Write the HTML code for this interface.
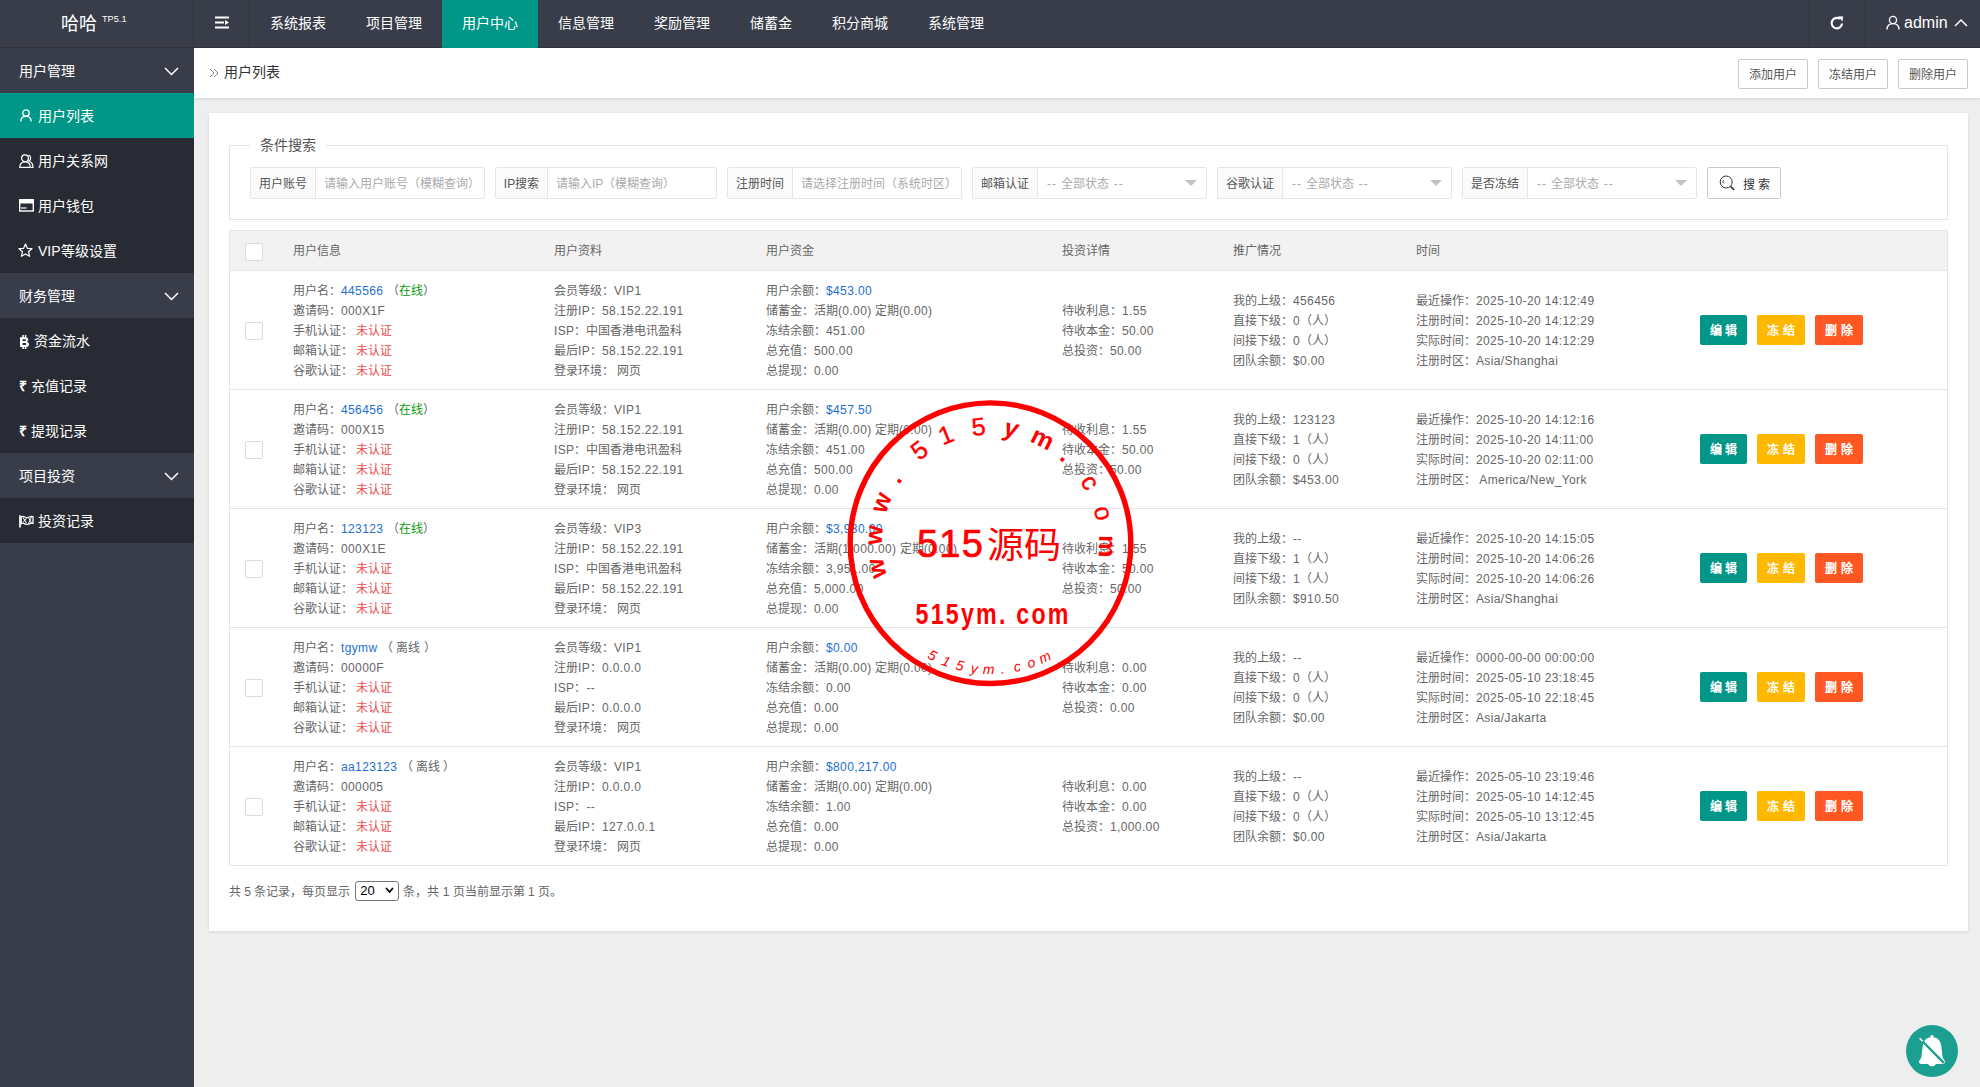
<!DOCTYPE html>
<html lang="zh-CN"><head><meta charset="utf-8">
<style>
*{box-sizing:border-box}
html,body{margin:0;padding:0}
body{width:1980px;height:1087px;overflow:hidden;position:relative;background:#eeeeee;font-family:"Liberation Sans",sans-serif;color:#666;font-size:12px}
.abs{position:absolute}
#hdr{position:absolute;left:0;top:0;width:1980px;height:48px;background:#393D4A;border-bottom:1px solid #30333D}
#hdr .vl{position:absolute;top:0;width:1px;height:47px;background:#30333D}
#hdr .nav{position:absolute;top:0;height:47px;line-height:46px;font-size:14px;color:#fff;white-space:nowrap}
#hdr .act{position:absolute;left:442px;top:0;width:96px;height:48px;background:#009688}
#logo{position:absolute;left:61px;top:9.5px;font-size:18px;color:#fff;line-height:28px;white-space:nowrap}
#logo sup{font-size:9.2px;position:absolute;left:41px;top:-5px;line-height:28px}
#side{position:absolute;left:0;top:48px;width:194px;height:1039px;background:#393D4A}
#side .it{position:absolute;left:0;width:194px;height:45px;background:#282B33;color:#fff;font-size:14px;line-height:45px;white-space:nowrap}
#side .gp{position:absolute;left:0;width:194px;height:45px;background:#393D4A;color:#fff;font-size:14px;line-height:45px;white-space:nowrap}
#side .on{background:#009688}
#side .tx{position:absolute;top:1px}
#side svg{position:absolute}
#crumb{position:absolute;left:194px;top:48px;width:1786px;height:50px;background:#fff;box-shadow:0 1px 3px rgba(0,0,0,.12)}
.tbtn{position:absolute;top:11px;width:70px;height:30px;border:1px solid #C9C9C9;border-radius:2px;background:#fff;font-size:12px;color:#555;line-height:31px;text-align:center}
#card{position:absolute;left:209px;top:113px;width:1759px;height:818px;background:#fff;box-shadow:0 1px 3px rgba(0,0,0,.1)}
#fs{position:absolute;left:229px;top:145px;width:1719px;height:75px;border:1px solid #e6e6e6;border-top:none}
#fs .tl{position:absolute;top:0;height:1px;background:#e6e6e6}
#legend{position:absolute;left:260px;top:135px;font-size:14px;line-height:20px;color:#555}
.ig{position:absolute;top:167px;height:32px;border:1px solid #e6e6e6;border-radius:2px;background:#fff}
.ig .lb{position:absolute;left:0;top:0;height:30px;background:#FBFBFB;border-right:1px solid #e6e6e6;color:#555;line-height:32px;text-align:center;white-space:nowrap}
.ig .ph{position:absolute;top:0;line-height:32px;color:#aaa;white-space:nowrap}
.ig .ar{position:absolute;top:12px;width:0;height:0;border-left:6px solid transparent;border-right:6px solid transparent;border-top:6px solid #c2c2c2}
#sbtn{position:absolute;left:1707px;top:167px;width:74px;height:32px;border:1px solid #C9C9C9;border-radius:2px;background:#fff;color:#333;line-height:30px;font-size:12px;white-space:nowrap}
#tbl{position:absolute;left:229px;top:230px;width:1719px;height:636px;border:1px solid #e6e6e6}
#th{position:absolute;left:230px;top:231px;width:1717px;height:40px;background:#f2f2f2;border-bottom:1px solid #e6e6e6}
#th span{position:absolute;top:1px;line-height:39px;color:#666}
.cb{position:absolute;width:18px;height:18px;border:1px solid #dcdcdc;background:#fff;border-radius:2px}
.row{position:absolute;left:230px;width:1717px;height:119px;border-bottom:1px solid #e6e6e6}
.row .cb{top:51px}
.cell{position:absolute;top:0;padding-top:2px;height:118px;display:flex;flex-direction:column;justify-content:center;line-height:20px;white-space:nowrap;color:#666}
.cell i{font-style:normal;letter-spacing:0.37px}
.b{color:#1E6FD0}
.g{color:#0A9A0A}
.r{color:#EB4A4F}
.acts{position:absolute;left:1470px;top:44px;height:30px;white-space:nowrap}
.bt{position:absolute;top:0;height:30px;line-height:33px;color:#fff;border-radius:2px;text-align:center;font-size:12px;font-weight:bold}
.bt:nth-child(1){left:0;width:47px}
.bt:nth-child(2){left:57px;width:48px}
.bt:nth-child(3){left:115px;width:48px}
#pg{position:absolute;left:229px;top:882px;line-height:20px;color:#666;white-space:nowrap}
#sel{display:inline-block;vertical-align:middle;width:44px;height:20px;border:1px solid #767676;border-radius:3px;position:relative;margin:0 4px 0 5px;top:-2px;color:#000;line-height:17px;padding-left:4px;font-size:13px}
#bell{position:absolute;left:1906px;top:1025px;width:52px;height:52px;border-radius:50%;background:#1A9F90}
</style></head>
<body>
<div id="hdr">
  <div id="logo">哈哈<sup>TP5.1</sup></div>
  <div class="vl" style="left:193px"></div>
  <div class="vl" style="left:249px"></div>
  <svg class="abs" style="left:214px;top:16px" width="16" height="13" viewBox="0 0 16 13"><rect x="1" y="0.5" width="14" height="2" fill="#fff"/><rect x="1" y="5.5" width="9" height="2" fill="#fff"/><path d="M11 4 L15 6.5 L11 9 Z" fill="#fff"/><rect x="1" y="10.5" width="14" height="2" fill="#fff"/></svg>
  <div class="act"></div>
  <div class="nav" style="left:270px">系统报表</div>
  <div class="nav" style="left:366px">项目管理</div>
  <div class="nav" style="left:462px">用户中心</div>
  <div class="nav" style="left:558px">信息管理</div>
  <div class="nav" style="left:654px">奖励管理</div>
  <div class="nav" style="left:750px">储蓄金</div>
  <div class="nav" style="left:832px">积分商城</div>
  <div class="nav" style="left:928px">系统管理</div>
  <div class="vl" style="left:1809px"></div>
  <div class="vl" style="left:1865px"></div>
  <svg class="abs" style="left:1829px;top:15px" width="16" height="16" viewBox="0 0 16 16"><path d="M13 8.5 A5.2 5.2 0 1 1 10.8 3.9" fill="none" stroke="#fff" stroke-width="2.2"/><path d="M9 1.2 L14.2 1.6 L13.4 6.6 Z" fill="#fff"/></svg>
  <svg class="abs" style="left:1886px;top:15px" width="14" height="15" viewBox="0 0 14 15"><circle cx="7" cy="5" r="3.6" fill="none" stroke="#fff" stroke-width="1.4"/><path d="M1 14.5 C1 10.5 3.5 8.6 7 8.6 C10.5 8.6 13 10.5 13 14.5" fill="none" stroke="#fff" stroke-width="1.4"/></svg>
  <div class="nav" style="left:1904px;font-size:16px">admin</div>
  <svg class="abs" style="left:1954px;top:18px" width="14" height="9" viewBox="0 0 14 9"><path d="M1 8 L7 2 L13 8" fill="none" stroke="#fff" stroke-width="1.5"/></svg>
</div>

<div id="side">
  <div class="gp" style="top:0"><span class="tx" style="left:19px">用户管理</span>
    <svg style="left:164px;top:19px" width="15" height="9" viewBox="0 0 15 9"><path d="M1 1 L7.5 7.5 L14 1" fill="none" stroke="#fff" stroke-width="1.5"/></svg></div>
  <div class="it on" style="top:45px"><svg style="left:20px;top:16px" width="12" height="13" viewBox="0 0 12 13"><circle cx="6" cy="4" r="3.2" fill="none" stroke="#fff" stroke-width="1.3"/><path d="M0.8 12.5 C0.8 9 3 7.4 6 7.4 C9 7.4 11.2 9 11.2 12.5" fill="none" stroke="#fff" stroke-width="1.3"/></svg><span class="tx" style="left:38px">用户列表</span></div>
  <div class="it" style="top:90px"><svg style="left:19px;top:16px" width="15" height="14" viewBox="0 0 15 14"><circle cx="6" cy="4.2" r="3.4" fill="none" stroke="#fff" stroke-width="1.2"/><path d="M0.8 13.3 C0.8 9.6 3 7.8 6 7.8 C9 7.8 11.2 9.6 11.2 13.3 Z" fill="none" stroke="#fff" stroke-width="1.2"/><path d="M9.5 1.2 C12 1.5 12.5 5.5 10 7.2 C12.6 8 14 10 14 13.3 L12 13.3" fill="none" stroke="#fff" stroke-width="1.2"/></svg><span class="tx" style="left:38px">用户关系网</span></div>
  <div class="it" style="top:135px"><svg style="left:19px;top:16px" width="15" height="13" viewBox="0 0 15 13"><rect x="0.7" y="0.7" width="13.6" height="11.3" fill="none" stroke="#fff" stroke-width="1.4"/><rect x="0.5" y="0.5" width="14" height="4" fill="#fff"/><rect x="2" y="8.4" width="5.5" height="1.2" fill="#fff"/></svg><span class="tx" style="left:38px">用户钱包</span></div>
  <div class="it" style="top:180px"><svg style="left:18px;top:15px" width="15" height="15" viewBox="0 0 15 15"><path d="M7.5 1 L9.4 5.3 L14 5.7 L10.5 8.7 L11.6 13.3 L7.5 10.9 L3.4 13.3 L4.5 8.7 L1 5.7 L5.6 5.3 Z" fill="none" stroke="#fff" stroke-width="1.2" stroke-linejoin="round"/></svg><span class="tx" style="left:38px">VIP等级设置</span></div>
  <div class="gp" style="top:225px"><span class="tx" style="left:19px">财务管理</span>
    <svg style="left:164px;top:19px" width="15" height="9" viewBox="0 0 15 9"><path d="M1 1 L7.5 7.5 L14 1" fill="none" stroke="#fff" stroke-width="1.5"/></svg></div>
  <div class="it" style="top:270px"><svg style="left:19px;top:17px" width="11" height="14" viewBox="0 0 11 14"><path d="M1 2.2 H6.2 C8.4 2.2 9.3 3.3 9.3 4.6 C9.3 5.8 8.6 6.5 7.6 6.8 C9 7.1 10 8 10 9.4 C10 11 8.8 12 6.6 12 H1 Z M3.6 4.2 V6.1 H5.9 C6.6 6.1 6.9 5.7 6.9 5.15 C6.9 4.6 6.6 4.2 5.9 4.2 Z M3.6 7.9 V10 H6.1 C6.9 10 7.3 9.6 7.3 8.95 C7.3 8.3 6.9 7.9 6.1 7.9 Z" fill="#fff" fill-rule="evenodd"/><rect x="3.3" y="0" width="1.6" height="2.5" fill="#fff"/><rect x="5.8" y="0" width="1.6" height="2.5" fill="#fff"/><rect x="3.3" y="11.6" width="1.6" height="2.4" fill="#fff"/><rect x="5.8" y="11.6" width="1.6" height="2.4" fill="#fff"/></svg><span class="tx" style="left:34px">资金流水</span></div>
  <div class="it" style="top:315px"><span class="tx" style="left:19px;font-weight:bold">&#x20B9;</span><span class="tx" style="left:31px">充值记录</span></div>
  <div class="it" style="top:360px"><span class="tx" style="left:19px;font-weight:bold">&#x20B9;</span><span class="tx" style="left:31px">提现记录</span></div>
  <div class="gp" style="top:405px"><span class="tx" style="left:19px">项目投资</span>
    <svg style="left:164px;top:19px" width="15" height="9" viewBox="0 0 15 9"><path d="M1 1 L7.5 7.5 L14 1" fill="none" stroke="#fff" stroke-width="1.5"/></svg></div>
  <div class="it" style="top:450px"><svg style="left:19px;top:17px" width="15" height="13" viewBox="0 0 15 13"><path d="M1 0.3 L1 12.6" stroke="#fff" stroke-width="1.7"/><path d="M2.2 1.8 C4.5 0.2 6.5 3.2 8.6 2.6 C10.6 2 12 0.8 14 1.6 L14 8.4 C12 7.6 10.6 8.8 8.6 9.4 C6.5 10 4.5 7 2.2 8.6 Z" fill="none" stroke="#fff" stroke-width="1.3"/><path d="M4 2.5 L7.5 8 M7.5 3 L4 7.5 M9.5 2.5 L12.5 8 M12.5 2 L9.5 8.5" stroke="#fff" stroke-width="1"/></svg><span class="tx" style="left:38px">投资记录</span></div>
</div>

<div id="crumb">
  <svg class="abs" style="left:15px;top:20px" width="10" height="10" viewBox="0 0 10 10"><path d="M1 1 L5 5 L1 9 M5 1 L9 5 L5 9" fill="none" stroke="#888" stroke-width="1"/></svg>
  <span class="abs" style="left:30px;top:14px;font-size:14px;line-height:20px;color:#333">用户列表</span>
  <div class="tbtn" style="left:1544px">添加用户</div>
  <div class="tbtn" style="left:1624px">冻结用户</div>
  <div class="tbtn" style="left:1704px">删除用户</div>
</div>

<div id="card"></div>
<div id="fs"></div>
<div class="abs" style="left:229px;top:145px;width:21px;height:1px;background:#e6e6e6"></div>
<div class="abs" style="left:326px;top:145px;width:1622px;height:1px;background:#e6e6e6"></div>
<div id="legend">条件搜索</div>

<div class="ig" style="left:250px;width:235px"><div class="lb" style="width:65px">用户账号</div><div class="ph" style="left:73px">请输入用户账号（模糊查询）</div></div>
<div class="ig" style="left:495px;width:222px"><div class="lb" style="width:52px">IP搜索</div><div class="ph" style="left:60px">请输入IP（模糊查询）</div></div>
<div class="ig" style="left:727px;width:235px"><div class="lb" style="width:65px">注册时间</div><div class="ph" style="left:73px">请选择注册时间（系统时区）</div></div>
<div class="ig" style="left:972px;width:235px"><div class="lb" style="width:65px">邮箱认证</div><div class="ph" style="left:74px"><i style="font-style:normal;letter-spacing:1px">-- </i>全部状态<i style="font-style:normal;letter-spacing:1px"> --</i></div><div class="ar" style="left:212px"></div></div>
<div class="ig" style="left:1217px;width:235px"><div class="lb" style="width:65px">谷歌认证</div><div class="ph" style="left:74px"><i style="font-style:normal;letter-spacing:1px">-- </i>全部状态<i style="font-style:normal;letter-spacing:1px"> --</i></div><div class="ar" style="left:212px"></div></div>
<div class="ig" style="left:1462px;width:235px"><div class="lb" style="width:65px">是否冻结</div><div class="ph" style="left:74px"><i style="font-style:normal;letter-spacing:1px">-- </i>全部状态<i style="font-style:normal;letter-spacing:1px"> --</i></div><div class="ar" style="left:212px"></div></div>
<div id="sbtn"><svg class="abs" style="left:11px;top:7px" width="17" height="17" viewBox="0 0 17 17"><circle cx="7.2" cy="7" r="6" fill="none" stroke="#333" stroke-width="1"/><path d="M11.6 11.4 L15.2 15" stroke="#333" stroke-width="1.7"/><path d="M4.3 5.2 C3.9 6.2 3.9 7.4 4.5 8.3" fill="none" stroke="#333" stroke-width="0.9"/></svg><span class="abs" style="left:35px;top:1.5px">搜 索</span></div>

<div id="tbl"></div>
<div id="th"><div class="cb" style="left:15px;top:12px"></div><span style="left:63px">用户信息</span><span style="left:324px">用户资料</span><span style="left:536px">用户资金</span><span style="left:832px">投资详情</span><span style="left:1003px">推广情况</span><span style="left:1186px">时间</span></div>
<div class="row" style="top:271px">
<div class="cb" style="left:15px"></div>
<div class="cell" style="left:63px"><div>用户名：<span class="b"><i>445566</i></span> （<span class="g">在线</span>）</div><div>邀请码：<i>000X1F</i></div><div>手机认证： <span class="r">未认证</span></div><div>邮箱认证： <span class="r">未认证</span></div><div>谷歌认证： <span class="r">未认证</span></div></div>
<div class="cell" style="left:324px"><div>会员等级：<i>VIP1</i></div><div>注册<i>IP</i>：<i>58.152.22.191</i></div><div><i>ISP</i>：中国香港电讯盈科</div><div>最后<i>IP</i>：<i>58.152.22.191</i></div><div>登录环境： 网页</div></div>
<div class="cell" style="left:536px"><div>用户余额：<span class="b"><i>$453.00</i></span></div><div>储蓄金：活期<i>(0.00)</i> 定期<i>(0.00)</i></div><div>冻结余额：<i>451.00</i></div><div>总充值：<i>500.00</i></div><div>总提现：<i>0.00</i></div></div>
<div class="cell" style="left:832px"><div>待收利息：<i>1.55</i></div><div>待收本金：<i>50.00</i></div><div>总投资：<i>50.00</i></div></div>
<div class="cell" style="left:1003px"><div>我的上级：<i>456456</i></div><div>直接下级：<i>0</i>（人）</div><div>间接下级：<i>0</i>（人）</div><div>团队余额：<i>$0.00</i></div></div>
<div class="cell" style="left:1186px"><div>最近操作：<i>2025-10-20 14:12:49</i></div><div>注册时间：<i>2025-10-20 14:12:29</i></div><div>实际时间：<i>2025-10-20 14:12:29</i></div><div>注册时区：<i>Asia/Shanghai</i></div></div>
<div class="acts"><span class="bt" style="background:#009688">编 辑</span><span class="bt" style="background:#FFB800">冻 结</span><span class="bt" style="background:#FF5722">删 除</span></div>
</div>
<div class="row" style="top:390px">
<div class="cb" style="left:15px"></div>
<div class="cell" style="left:63px"><div>用户名：<span class="b"><i>456456</i></span> （<span class="g">在线</span>）</div><div>邀请码：<i>000X15</i></div><div>手机认证： <span class="r">未认证</span></div><div>邮箱认证： <span class="r">未认证</span></div><div>谷歌认证： <span class="r">未认证</span></div></div>
<div class="cell" style="left:324px"><div>会员等级：<i>VIP1</i></div><div>注册<i>IP</i>：<i>58.152.22.191</i></div><div><i>ISP</i>：中国香港电讯盈科</div><div>最后<i>IP</i>：<i>58.152.22.191</i></div><div>登录环境： 网页</div></div>
<div class="cell" style="left:536px"><div>用户余额：<span class="b"><i>$457.50</i></span></div><div>储蓄金：活期<i>(0.00)</i> 定期<i>(0.00)</i></div><div>冻结余额：<i>451.00</i></div><div>总充值：<i>500.00</i></div><div>总提现：<i>0.00</i></div></div>
<div class="cell" style="left:832px"><div>待收利息：<i>1.55</i></div><div>待收本金：<i>50.00</i></div><div>总投资：<i>50.00</i></div></div>
<div class="cell" style="left:1003px"><div>我的上级：<i>123123</i></div><div>直接下级：<i>1</i>（人）</div><div>间接下级：<i>0</i>（人）</div><div>团队余额：<i>$453.00</i></div></div>
<div class="cell" style="left:1186px"><div>最近操作：<i>2025-10-20 14:12:16</i></div><div>注册时间：<i>2025-10-20 14:11:00</i></div><div>实际时间：<i>2025-10-20 02:11:00</i></div><div>注册时区： <i>America/New_York</i></div></div>
<div class="acts"><span class="bt" style="background:#009688">编 辑</span><span class="bt" style="background:#FFB800">冻 结</span><span class="bt" style="background:#FF5722">删 除</span></div>
</div>
<div class="row" style="top:509px">
<div class="cb" style="left:15px"></div>
<div class="cell" style="left:63px"><div>用户名：<span class="b"><i>123123</i></span> （<span class="g">在线</span>）</div><div>邀请码：<i>000X1E</i></div><div>手机认证： <span class="r">未认证</span></div><div>邮箱认证： <span class="r">未认证</span></div><div>谷歌认证： <span class="r">未认证</span></div></div>
<div class="cell" style="left:324px"><div>会员等级：<i>VIP3</i></div><div>注册<i>IP</i>：<i>58.152.22.191</i></div><div><i>ISP</i>：中国香港电讯盈科</div><div>最后<i>IP</i>：<i>58.152.22.191</i></div><div>登录环境： 网页</div></div>
<div class="cell" style="left:536px"><div>用户余额：<span class="b"><i>$3,930.00</i></span></div><div>储蓄金：活期<i>(1,000.00)</i> 定期<i>(0.00)</i></div><div>冻结余额：<i>3,951.00</i></div><div>总充值：<i>5,000.00</i></div><div>总提现：<i>0.00</i></div></div>
<div class="cell" style="left:832px"><div>待收利息：<i>1.55</i></div><div>待收本金：<i>50.00</i></div><div>总投资：<i>50.00</i></div></div>
<div class="cell" style="left:1003px"><div>我的上级：<i>--</i></div><div>直接下级：<i>1</i>（人）</div><div>间接下级：<i>1</i>（人）</div><div>团队余额：<i>$910.50</i></div></div>
<div class="cell" style="left:1186px"><div>最近操作：<i>2025-10-20 14:15:05</i></div><div>注册时间：<i>2025-10-20 14:06:26</i></div><div>实际时间：<i>2025-10-20 14:06:26</i></div><div>注册时区：<i>Asia/Shanghai</i></div></div>
<div class="acts"><span class="bt" style="background:#009688">编 辑</span><span class="bt" style="background:#FFB800">冻 结</span><span class="bt" style="background:#FF5722">删 除</span></div>
</div>
<div class="row" style="top:628px">
<div class="cb" style="left:15px"></div>
<div class="cell" style="left:63px"><div>用户名：<span class="b"><i>tgymw</i></span> （ 离线 ）</div><div>邀请码：<i>00000F</i></div><div>手机认证： <span class="r">未认证</span></div><div>邮箱认证： <span class="r">未认证</span></div><div>谷歌认证： <span class="r">未认证</span></div></div>
<div class="cell" style="left:324px"><div>会员等级：<i>VIP1</i></div><div>注册<i>IP</i>：<i>0.0.0.0</i></div><div><i>ISP</i>：<i>--</i></div><div>最后<i>IP</i>：<i>0.0.0.0</i></div><div>登录环境： 网页</div></div>
<div class="cell" style="left:536px"><div>用户余额：<span class="b"><i>$0.00</i></span></div><div>储蓄金：活期<i>(0.00)</i> 定期<i>(0.00)</i></div><div>冻结余额：<i>0.00</i></div><div>总充值：<i>0.00</i></div><div>总提现：<i>0.00</i></div></div>
<div class="cell" style="left:832px"><div>待收利息：<i>0.00</i></div><div>待收本金：<i>0.00</i></div><div>总投资：<i>0.00</i></div></div>
<div class="cell" style="left:1003px"><div>我的上级：<i>--</i></div><div>直接下级：<i>0</i>（人）</div><div>间接下级：<i>0</i>（人）</div><div>团队余额：<i>$0.00</i></div></div>
<div class="cell" style="left:1186px"><div>最近操作：<i>0000-00-00 00:00:00</i></div><div>注册时间：<i>2025-05-10 23:18:45</i></div><div>实际时间：<i>2025-05-10 22:18:45</i></div><div>注册时区：<i>Asia/Jakarta</i></div></div>
<div class="acts"><span class="bt" style="background:#009688">编 辑</span><span class="bt" style="background:#FFB800">冻 结</span><span class="bt" style="background:#FF5722">删 除</span></div>
</div>
<div class="row" style="top:747px">
<div class="cb" style="left:15px"></div>
<div class="cell" style="left:63px"><div>用户名：<span class="b"><i>aa123123</i></span> （ 离线 ）</div><div>邀请码：<i>000005</i></div><div>手机认证： <span class="r">未认证</span></div><div>邮箱认证： <span class="r">未认证</span></div><div>谷歌认证： <span class="r">未认证</span></div></div>
<div class="cell" style="left:324px"><div>会员等级：<i>VIP1</i></div><div>注册<i>IP</i>：<i>0.0.0.0</i></div><div><i>ISP</i>：<i>--</i></div><div>最后<i>IP</i>：<i>127.0.0.1</i></div><div>登录环境： 网页</div></div>
<div class="cell" style="left:536px"><div>用户余额：<span class="b"><i>$800,217.00</i></span></div><div>储蓄金：活期<i>(0.00)</i> 定期<i>(0.00)</i></div><div>冻结余额：<i>1.00</i></div><div>总充值：<i>0.00</i></div><div>总提现：<i>0.00</i></div></div>
<div class="cell" style="left:832px"><div>待收利息：<i>0.00</i></div><div>待收本金：<i>0.00</i></div><div>总投资：<i>1,000.00</i></div></div>
<div class="cell" style="left:1003px"><div>我的上级：<i>--</i></div><div>直接下级：<i>0</i>（人）</div><div>间接下级：<i>0</i>（人）</div><div>团队余额：<i>$0.00</i></div></div>
<div class="cell" style="left:1186px"><div>最近操作：<i>2025-05-10 23:19:46</i></div><div>注册时间：<i>2025-05-10 14:12:45</i></div><div>实际时间：<i>2025-05-10 13:12:45</i></div><div>注册时区：<i>Asia/Jakarta</i></div></div>
<div class="acts"><span class="bt" style="background:#009688">编 辑</span><span class="bt" style="background:#FFB800">冻 结</span><span class="bt" style="background:#FF5722">删 除</span></div>
</div>

<div id="pg">共 5 条记录，每页显示<span id="sel">20<svg class="abs" style="left:29px;top:5px" width="9" height="7" viewBox="0 0 9 7"><path d="M1 1 L4.5 5 L8 1" fill="none" stroke="#000" stroke-width="1.8"/></svg></span>条，共 1 页当前显示第 1 页。</div>

<svg class="abs" style="left:840px;top:393px" width="300" height="300" viewBox="0 0 300 300"><circle cx="150.5" cy="150.2" r="140.3" fill="none" stroke="#FF0000" stroke-width="5.4"/><g fill="#FF0000" font-family="Liberation Sans" font-size="25" text-anchor="middle"><text x="150.5" y="41.69999999999999" transform="rotate(-102.5 150.5 150.2)" font-weight="bold">w</text><text x="150.5" y="41.69999999999999" transform="rotate(-86 150.5 150.2)" font-weight="bold">w</text><text x="150.5" y="41.69999999999999" transform="rotate(-69.6 150.5 150.2)" font-weight="bold">w</text><text x="150.5" y="41.69999999999999" transform="rotate(-55.7 150.5 150.2)" font-weight="bold">.</text><text x="150.5" y="41.69999999999999" transform="rotate(-37.5 150.5 150.2)" stroke="#FF0000" stroke-width="0.4">5</text><text x="150.5" y="41.69999999999999" transform="rotate(-22.4 150.5 150.2)" stroke="#FF0000" stroke-width="0.4">1</text><text x="150.5" y="41.69999999999999" transform="rotate(-5.8 150.5 150.2)" stroke="#FF0000" stroke-width="0.4">5</text><text x="150.5" y="41.69999999999999" transform="rotate(10.3 150.5 150.2)" font-weight="bold" font-style="italic">y</text><text x="150.5" y="41.69999999999999" transform="rotate(26.5 150.5 150.2)" font-weight="bold">m</text><text x="150.5" y="41.69999999999999" transform="rotate(40.7 150.5 150.2)" font-weight="bold">.</text><text x="150.5" y="41.69999999999999" transform="rotate(58.6 150.5 150.2)" stroke="#FF0000" stroke-width="0.4">c</text><text x="150.5" y="41.69999999999999" transform="rotate(75 150.5 150.2)" stroke="#FF0000" stroke-width="0.4">o</text><text x="150.5" y="41.69999999999999" transform="rotate(91.6 150.5 150.2)" font-weight="bold">m</text></g><g fill="#FF0000" font-family="Liberation Sans" font-style="italic" font-size="14" text-anchor="middle"><text x="150.5" y="281.2" transform="rotate(27.4 150.5 150.2)">5</text><text x="150.5" y="281.2" transform="rotate(20.6 150.5 150.2)">1</text><text x="150.5" y="281.2" transform="rotate(14 150.5 150.2)">5</text><text x="150.5" y="281.2" transform="rotate(7.4 150.5 150.2)">y</text><text x="150.5" y="281.2" transform="rotate(0.8 150.5 150.2)">m</text><text x="150.5" y="281.2" transform="rotate(-5.5 150.5 150.2)">.</text><text x="150.5" y="281.2" transform="rotate(-12.2 150.5 150.2)">c</text><text x="150.5" y="281.2" transform="rotate(-18.8 150.5 150.2)">o</text><text x="150.5" y="281.2" transform="rotate(-25.4 150.5 150.2)">m</text></g><text x="77" y="163.5" fill="#FF0000" stroke="#FF0000" stroke-width="0.7" font-family="Liberation Sans" font-size="38" letter-spacing="1.2">515</text><text x="147" y="164.5" fill="#FF0000" font-family="Liberation Sans" font-size="36" font-weight="500" textLength="74" lengthAdjust="spacingAndGlyphs">源码</text><text transform="translate(75.5 231) scale(0.8 1)" fill="#FF0000" font-family="Liberation Sans" font-size="29" font-weight="bold" letter-spacing="2.8">515ym. com</text></svg>
<div id="bell"><svg class="abs" style="left:0;top:0" width="52" height="52" viewBox="0 0 52 52"><circle cx="26" cy="11.6" r="1.7" fill="#fff"/><path d="M26 12.3 C31.5 12.3 34.6 15.8 35.2 20.5 L36.6 31.8 C36.9 34 38.6 35 39 36.5 C39.2 38 38.3 39 36.5 39 L30 39 C29 40.5 27.6 41.3 26 41.3 C24.4 41.3 23 40.5 22 39 L15.5 39 C13.7 39 12.8 38 13 36.5 C13.4 35 15.1 34 15.4 31.8 L16.8 20.5 C17.4 15.8 20.5 12.3 26 12.3 Z" fill="#fff"/><path d="M15.2 15 L37.8 37.8" stroke="#1A9F90" stroke-width="2.4"/><path d="M13.6 13.2 L16.6 16.2" stroke="#fff" stroke-width="1.6"/></svg></div>
</body></html>
